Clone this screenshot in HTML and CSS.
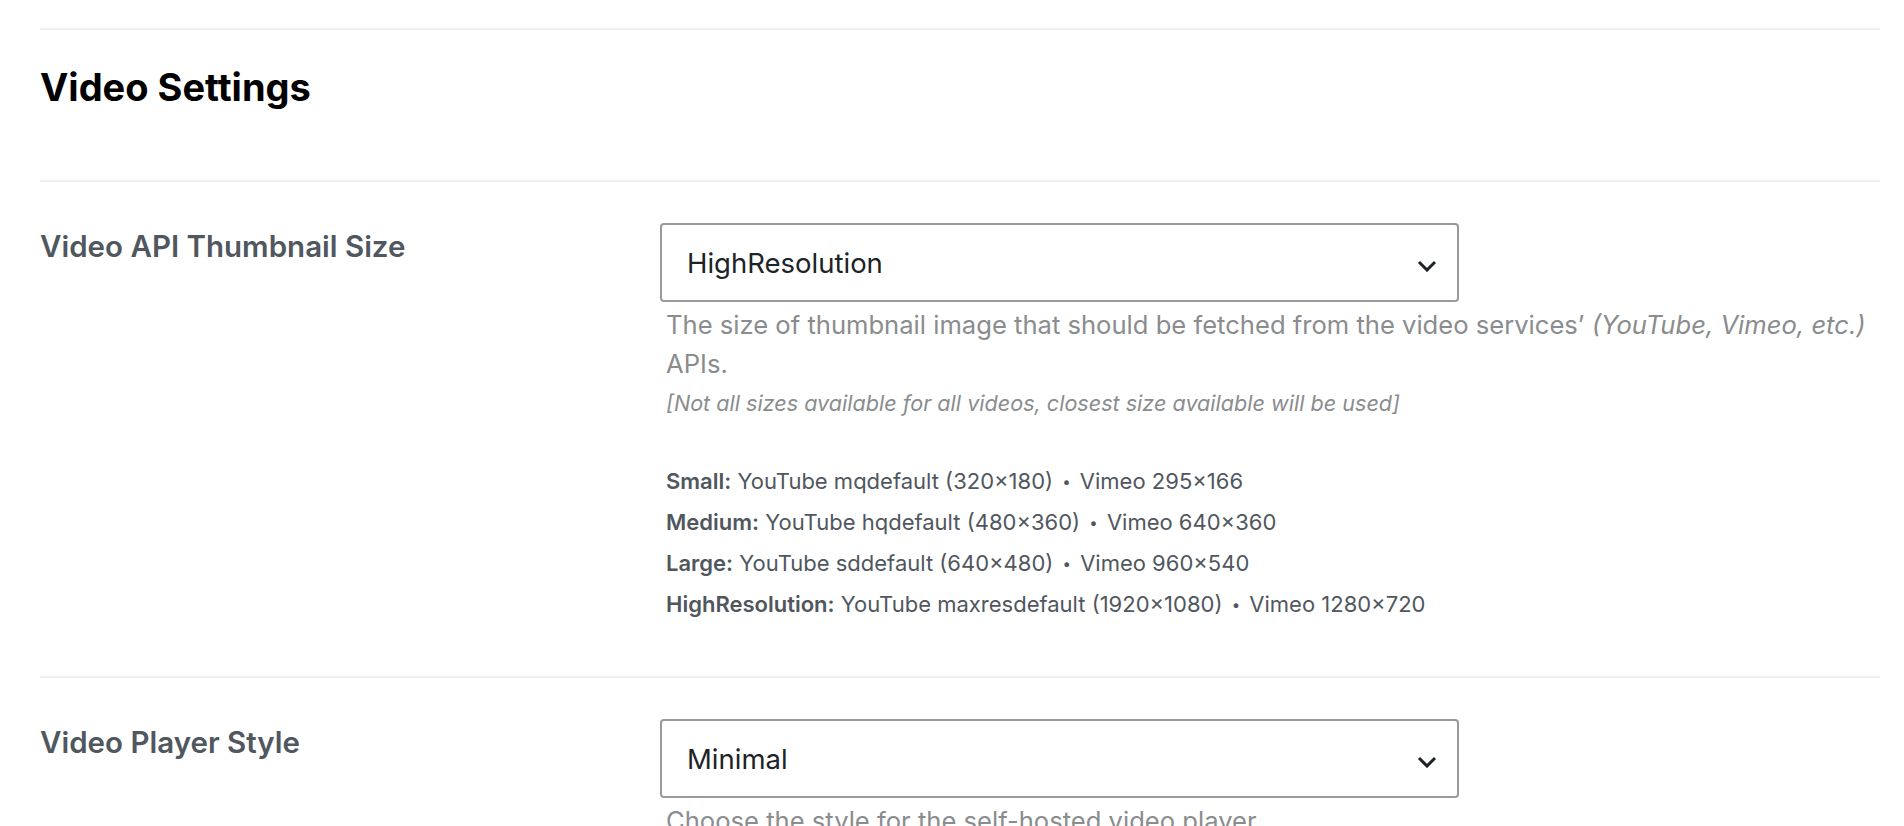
FILE: index.html
```html
<!DOCTYPE html>
<html lang="en">
<head>
  <meta charset="UTF-8" />
  <title>Video Settings</title>
  <meta name="viewport" content="width=device-width, initial-scale=1.0" />
  <link rel="stylesheet" href="styles.css">
</head>
<body>
  <div class="settings">
    <div class="section-head">
      <h2>Video Settings</h2>
    </div>

    <div class="field-row">
      <div class="field-label">Video API Thumbnail Size</div>
      <div class="field-control">
        <div class="select">
          <span>HighResolution</span>
          <svg class="chevron" width="20" height="12" viewBox="0 0 20 12"><path d="M2 2 L10 10 L18 2" /></svg>
        </div>
        <p class="description">
          The size of thumbnail image that should be fetched from the video services’ <em>(YouTube, Vimeo, etc.)</em> APIs.
          <span class="note">[Not all sizes available for all videos, closest size available will be used]</span>
        </p>
        <ul class="size-list">
          <li><strong>Small:</strong> YouTube mqdefault (320×180) <span class="sep">•</span> Vimeo 295×166</li>
          <li><strong>Medium:</strong> YouTube hqdefault (480×360) <span class="sep">•</span> Vimeo 640×360</li>
          <li><strong>Large:</strong> YouTube sddefault (640×480) <span class="sep">•</span> Vimeo 960×540</li>
          <li><strong>HighResolution:</strong> YouTube maxresdefault (1920×1080) <span class="sep">•</span> Vimeo 1280×720</li>
        </ul>
      </div>
    </div>

    <div class="field-row">
      <div class="field-label">Video Player Style</div>
      <div class="field-control">
        <div class="select">
          <span>Minimal</span>
          <svg class="chevron" width="20" height="12" viewBox="0 0 20 12"><path d="M2 2 L10 10 L18 2" /></svg>
        </div>
        <p class="description">Choose the style for the self-hosted video player.</p>
      </div>
    </div>
  </div>
</body>
</html>
```

FILE: styles.css
```css
body {
  margin: 0;
  padding: 28px 24px 0 40px;
  background: #ffffff;
  font-family: "Inter", "Liberation Sans", sans-serif;
  color: #1d2327;
  overflow: hidden;
}

.section-head {
  border-top: 2px solid #f0f0f1;
  border-bottom: 2px solid #f0f0f1;
  padding: 33px 0 69px;
}

h2 {
  margin: 0;
  font-size: 38px;
  line-height: 48px;
  font-weight: 700;
  color: #000;
}

.field-row {
  display: grid;
  grid-template-columns: 620px 1fr;
  padding: 41px 0 51px;
  border-bottom: 2px solid #f0f0f1;
}

.field-label {
  padding-top: 5px;
  font-size: 29.5px;
  line-height: 36px;
  font-weight: 600;
  color: #50575e;
}

.select {
  width: 799px;
  height: 79px;
  box-sizing: border-box;
  border: 2px solid #999a9c;
  border-radius: 4px;
  padding: 0 20px 0 25px;
  display: flex;
  align-items: center;
  justify-content: space-between;
  font-size: 27.5px;
  color: #1d2327;
}

.chevron {
  margin-top: 7px;
}

.chevron path {
  fill: none;
  stroke: #1d2327;
  stroke-width: 3;
}

.description {
  margin: 3px 0 0;
  padding-left: 6px;
  font-size: 25.6px;
  line-height: 39px;
  color: #8a8c8e;
}

.description em {
  font-style: italic;
}

.note {
  display: block;
  margin-top: 6px;
  font-size: 21.6px;
  line-height: 28px;
  font-style: italic;
}

.size-list {
  list-style: none;
  margin: 44px 0 0;
  padding-left: 6px;
  font-size: 22px;
  line-height: 41px;
  color: #50575e;
}

.size-list strong {
  font-weight: 600;
}

.sep {
  font-size: 15px;
  padding: 0 3px;
  vertical-align: 2px;
}
```
